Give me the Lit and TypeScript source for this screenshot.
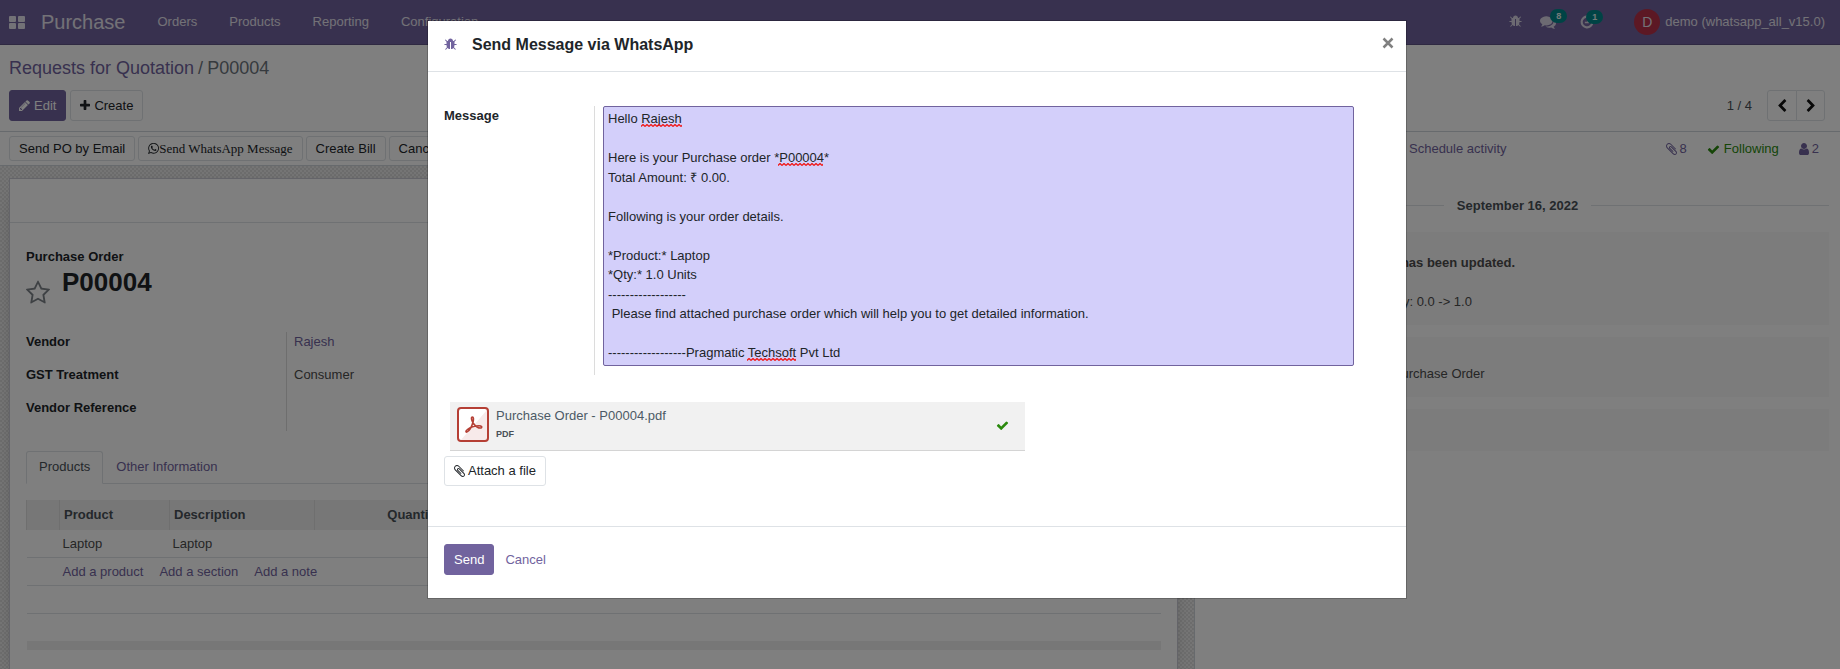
import { LitElement, html, css, svg } from "lit";
import { customElement } from "lit/decorators.js";

const ICONS: Record<string, { w: number; d: string }> = {
  bug: { w: 1664, d: "M1632 832q0 26-19 45t-45 19h-224q0 171-67 290l208 209q19 19 19 45t-19 45q-18 19-45 19t-45-19l-198-197q-5 5-15 13t-42 28.500-65 36.500-82 29-97 13v-896h-128v896q-51 0-101.500-13.500t-87-33-66-39-43.500-32.500l-15-14-183 207q-20 21-48 21-24 0-43-16-19-18-20.500-44.500t15.500-46.500l202-227q-58-114-58-274h-224q-26 0-45-19t-19-45 19-45 45-19h224v-294l-173-173q-19-19-19-45t19-45 45-19 45 19l173 173h844l173-173q19-19 45-19t45 19 19 45-19 45l-173 173v294h224q26 0 45 19t19 45zM1152 384h-640q0-133 93.500-226.500t226.500-93.500 226.500 93.500 93.500 226.500z" },
  pencil: { w: 1536, d: "M363 1536l91-91-235-235-91 91v107h128v128h107zM886 608q0-22-22-22-10 0-17 7l-542 542q-7 7-7 17 0 22 22 22 10 0 17-7l542-542q7-7 7-17zM832 416l416 416-832 832h-416v-416zM1515 512q0 53-37 90l-166 166-416-416 166-165q36-38 90-38 53 0 91 38l235 234q37 39 37 91z" },
  plus: { w: 1408, d: "M1408 736v192q0 40-28 68t-68 28h-416v416q0 40-28 68t-68 28h-192q-40 0-68-28t-28-68v-416h-416q-40 0-68-28t-28-68v-192q0-40 28-68t68-28h416v-416q0-40 28-68t68-28h192q40 0 68 28t28 68v416h416q40 0 68 28t28 68z" },
  check: { w: 1792, d: "M1671 566q0 40-28 68l-724 724-136 136q-28 28-68 28t-68-28l-136-136-362-362q-28-28-28-68t28-68l136-136q28-28 68-28t68 28l294 295 656-657q28-28 68-28t68 28l136 136q28 28 28 68z" },
  user: { w: 1280, d: "M1280 1399q0 109-62.500 187t-150.500 78h-854q-88 0-150.500-78t-62.500-187q0-85 8.500-160.500t31.500-152 58.500-131 94-89 134.500-34.500q131 128 313 128t313-128q76 0 134.500 34.500t94 89 58.500 131 31.500 152 8.500 160.500zM1024 512q0 159-112.500 271.500t-271.500 112.500-271.500-112.500-112.500-271.500 112.500-271.500 271.500-112.500 271.500 112.500 112.500 271.500z" },
  left: { w: 1280, d: "M1171 301l-531 531 531 531q19 19 19 45t-19 45l-166 166q-19 19-45 19t-45-19l-742-742q-19-19-19-45t19-45l742-742q19-19 45-19t45 19l166 166q19 19 19 45t-19 45z" },
  right: { w: 1280, d: "M1107 877l-742 742q-19 19-45 19t-45-19l-166-166q-19-19-19-45t19-45l531-531-531-531q-19-19-19-45t19-45l166-166q19-19 45-19t45 19l742 742q19 19 19 45t-19 45z" },
  clip: { w: 1408, d: "M1404 1385q0 117-79 196t-196 79q-135 0-235-100l-777-776q-113-115-113-271 0-159 110-270t269-111q158 0 273 113l605 606q10 10 10 22 0 16-30.500 46.500t-46.500 30.500q-13 0-23-10l-606-607q-79-77-181-77-106 0-179 75t-73 181q0 105 76 181l776 777q63 63 145 63 64 0 106-42t42-106q0-82-63-145l-581-581q-26-24-60-24-29 0-48 19t-19 48q0 32 25 59l410 410q10 10 10 22 0 16-31 47t-47 31q-12 0-22-10l-410-410q-63-61-63-149 0-82 57-139t139-57q88 0 149 63l581 581q100 98 100 235z" },
  comments: { w: 1792, d: "M1408 768q0 139-94 257t-256.500 186.500-353.500 68.500q-86 0-176-16-124 88-278 128-36 9-86 16h-3q-11 0-20.500-8t-11.500-21q-1-3-1-6.500t.5-6.500 2-6l2.500-5t3.500-5.500 4-5 4.500-5 4-4.500q5-6 23-25t26-29.500 22.500-29 25-38.500 20.500-44q-124-72-195-177t-71-224q0-139 94-257t256.500-186.500 353.500-68.500 353.500 68.500 256.500 186.500 94 257zM1792 1024q0 120-71 224.500t-195 176.500q10 24 20.500 44t25 38.500 22.500 29 26 29.500 23 25q1 1 4 4.500t4.500 5 4 5 3.500 5.500l2.500 5t2 6 .5 6.500-1 6.500q-3 14-13 22t-22 7q-50-7-86-16-154-40-278-128-90 16-176 16-271 0-472-132 58 4 88 4 161 0 309-45t264-129q125-92 192-212t67-254q0-77-23-152 129 71 204 178t75 230z" },
  whatsapp: { w: 1536, d: "M985 974q13 0 97.500 44t89.500 53q2 5 2 15 0 33-17 76-16 39-71 65.500t-102 26.500q-57 0-190-62-98-45-170-118t-148-185q-72-107-71-194v-8q3-91 74-158 24-22 52-22 6 0 18 1.500t19 1.500q19 0 26.500 6.500t15.500 27.500q8 20 33 88t25 75q0 21-34.500 57.500t-34.500 46.500q0 7 5 15 34 73 102 137 56 53 151 101 12 7 22 7 15 0 54-48.500t52-48.500zM782 1492q127 0 243.500-50t200.500-134 134-200.500 50-243.500-50-243.500-134-200.500-200.500-134-243.500-50-243.500 50-200.500 134-134 200.500-50 243.500q0 203 120 368l-79 233 242-77q158 104 345 104zM782 111q153 0 292.500 60t240.500 161 161 240.500 60 292.500-60 292.500-161 240.500-240.500 161-292.500 60q-195 0-365-94l-417 134 136-405q-108-178-108-389 0-153 60-292.500t161-240.500 240.500-161 292.500-60z" },
  star: { w: 1664, d: "M1137 1004l306-297-422-62-189-382-189 382-422 62 306 297-73 421 378-199 377 199zM1664 647q0 22-26 48l-363 354 86 500q1 7 1 20 0 50-41 50-19 0-40-12l-449-236-449 236q-22 12-40 12-21 0-31.500-14.500t-10.500-35.500q0-6 2-20l86-500-364-354q-25-27-25-48 0-37 56-46l502-73 225-455q19-41 49-41t49 41l225 455 502 73q56 9 56 46z" },
};

/** Font-style glyph: one em tall, as wide as the glyph's own advance. */
const icon = (name: string, size = 13) => {
  const i = ICONS[name];
  return html`<svg class="icon" aria-hidden="true" height=${size} width=${Math.round((i.w / 1792) * size)}
    viewBox="0 0 ${i.w} 1792"><path fill="currentColor" d=${i.d}></path></svg>`;
};

const MESSAGE = `Hello Rajesh

Here is your Purchase order *P00004*
Total Amount: ₹ 0.00.

Following is your order details.

*Product:* Laptop
*Qty:* 1.0 Units
------------------
 Please find attached purchase order which will help you to get detailed information.

------------------Pragmatic Techsoft Pvt Ltd`;

const base = css`
  * { box-sizing: border-box; }
  a { color: #71639e; text-decoration: none; }
  button { font: inherit; color: inherit; cursor: pointer; margin: 0; }
  .icon { display: inline-block; flex: none; }
  .btn {
    display: inline-flex; align-items: center; gap: 4px; height: 31px; padding: 0 9px;
    border: 1px solid #dee2e6; border-radius: 3px; background: #fff; color: #212529; white-space: nowrap;
  }
  .primary { background: #71639e; border-color: #71639e; color: #fff; }
`;

@customElement("main-navbar")
export class MainNavbar extends LitElement {
  static styles = [base, css`
    :host { display: block; }
    .bar { display: flex; align-items: center; height: 45px; padding: 0 15px 0 9px; background: #71639e; border-bottom: 1px solid #5f5385; color: #fff; }
    .bar a { color: #e6e4ee; }
    .apps { display: flex; padding: 0; border: 0; background: none; color: #e6e4ee; margin-right: 16px; }
    .brand { font-size: 20px; line-height: 30px; }
    .menu { display: flex; gap: 32px; margin: 0 auto 0 32px; }
    .tray { display: flex; align-items: center; color: #d8d5e4; }
    .tray button { position: relative; display: flex; border: 0; padding: 0; background: none; }
    .bug { margin-right: 18px; }
    .talk { margin-right: 24px; }
    .badge {
      position: absolute; left: 10px; top: -5px; min-width: 16px; height: 14px; padding: 0 6px; border-radius: 7px;
      background: #00878a; color: #e8f3f3; font-size: 9px; font-weight: 700; line-height: 14px;
    }
    .clock .badge { left: 6px; }
    .user { display: flex; align-items: center; gap: 5px; margin-left: 40px; }
    .avatar { width: 26px; height: 26px; border-radius: 50%; background: #b83048; font-size: 14px; line-height: 26px; text-align: center; }
  `];
  render() {
    return html`<header class="bar">
      <button class="apps" aria-label="Apps"><svg width="16" height="13" viewBox="0 0 16 13" fill="currentColor">
        <rect width="7" height="6" rx="1"/><rect x="9" width="7" height="6" rx="1"/><rect y="7" width="7" height="6" rx="1"/><rect x="9" y="7" width="7" height="6" rx="1"/></svg></button>
      <a class="brand" href="#">Purchase</a>
      <nav class="menu"><a href="#">Orders</a><a href="#">Products</a><a href="#">Reporting</a><a href="#">Configuration</a></nav>
      <div class="tray">
        <button class="bug" aria-label="Debug">${icon("bug", 14)}</button>
        <button class="talk" aria-label="Messages">${icon("comments", 16)}<span class="badge">8</span></button>
        <button class="clock" aria-label="Activities"><svg width="14" height="14" viewBox="0 0 13 13" fill="none" stroke="currentColor"><path stroke-width="2" d="M7 1.500A5 5 0 1 0 11.500 7"/><path stroke-width="1.500" d="M4.500 7H7.500V4"/></svg><span class="badge">1</span></button>
        <a class="user" href="#"><span class="avatar">D</span>demo (whatsapp_all_v15.0)</a>
      </div>
    </header>`;
  }
}

@customElement("control-panel")
export class ControlPanel extends LitElement {
  static styles = [base, css`
    :host { display: block; }
    .panel { padding: 12px 15px 10px 9px; border-bottom: 1px solid #ced4da; background: #fff; }
    .crumbs { display: flex; gap: 4px; margin: 0 0 11px; font-size: 18px; line-height: 22px; color: #6c757d; font-weight: 400; }
    .actions { display: flex; align-items: center; gap: 4px; }
    .pager { display: flex; align-items: center; gap: 15px; margin-left: auto; color: #495057; }
    .pair { display: flex; }
    .pair .btn { width: 29px; padding: 0; justify-content: center; color: #111; }
    .pair .prev { width: 30px; border-radius: 3px 0 0 3px; }
    .next { border-radius: 0 3px 3px 0; margin-left: -1px; }
  `];
  render() {
    return html`<section class="panel">
      <nav class="crumbs" aria-label="Breadcrumb"><a href="#">Requests for Quotation</a><span>/</span><span>P00004</span></nav>
      <div class="actions">
        <button class="btn primary">${icon("pencil")}Edit</button>
        <button class="btn">${icon("plus")}Create</button>
        <div class="pager"><span>1 / 4</span><div class="pair">
          <button class="btn prev" aria-label="Previous">${icon("left", 14)}</button><button class="btn next" aria-label="Next">${icon("right", 14)}</button>
        </div></div>
      </div>
    </section>`;
  }
}

@customElement("order-form")
export class OrderForm extends LitElement {
  static styles = [base, css`
    :host { display: flex; flex-direction: column; min-width: 0; overflow: hidden; }
    .status { display: flex; gap: 3px; padding: 4px 9px; border-bottom: 1px solid #ced4da; background: #fff; }
    .status .btn { height: 25px; }
    .wa { font-family: "Liberation Serif", serif; gap: 0; }
    .canvas {
      flex: 1; padding: 12px 16px 0 9px;
      background: repeating-conic-gradient(#dadada 0 25%, #ebebeb 0 50%) 0 0 / 4px 4px;
    }
    .sheet { height: 100%; background: #fff; border: 1px solid #c8c8d3; box-shadow: 0 5px 20px -15px #000; }
    .steps { height: 44px; border-bottom: 1px solid #dee2e6; }
    .content { padding: 24px 16px; }
    .caption { font-weight: 700; color: #212529; }
    .title { display: flex; align-items: flex-start; gap: 12px; }
    .title h1 { margin: 0; font-size: 26px; line-height: 31px; color: #212529; }
    .star { border: 0; background: none; padding: 13px 0 0; display: flex; color: #7c8288; }
    .fields { display: grid; grid-template-columns: 260px 1fr; margin: 26px 0 20px; }
    .fields dt { height: 33px; font-weight: 700; color: #212529; }
    .fields dd { height: 33px; margin: 0; padding-left: 7px; border-left: 1px solid #dcdcdc; color: #4c4c4c; }
    .tabs { display: flex; border-bottom: 1px solid #dee2e6; margin-bottom: 16px; }
    .tab { height: 33px; padding: 0 12px; border: 1px solid transparent; border-radius: 3px 3px 0 0; background: none; color: #71639e; margin-bottom: -1px; }
    .tab.active { color: #495057; background: #fff; border-color: #dee2e6 #dee2e6 #fff; }
    table { width: 100%; border-collapse: collapse; table-layout: fixed; color: #4c4c4c; }
    th { height: 30px; padding: 0 4px; text-align: left; background: #eee; border-left: 1px solid #dfdfdf; color: #495057; }
    th.num { text-align: right; }
    td { height: 28px; padding: 0 3px; border-bottom: 1px solid #dee2e6; }
    .c0 { width: 33px; } .c1 { width: 110px; } .c2 { width: 145px; } .c3 { width: 130px; }
    .adds { display: flex; gap: 16px; }
    .foot td { height: 9px; background: #eee; border: 0; }
    tr.last td { height: 27px; border: 0; }
  `];
  render() {
    return html`
      <div class="status">
        <button class="btn">Send PO by Email</button>
        <button class="btn wa">${icon("whatsapp", 13)}Send WhatsApp Message</button>
        <button class="btn">Create Bill</button>
        <button class="btn">Cancel</button>
      </div>
      <div class="canvas"><div class="sheet">
        <div class="steps"></div>
        <div class="content">
          <div class="caption">Purchase Order</div>
          <div class="title"><button class="star" aria-label="Priority">${icon("star", 26)}</button><h1>P00004</h1></div>
          <dl class="fields">
            <dt>Vendor</dt><dd><a href="#">Rajesh</a></dd>
            <dt>GST Treatment</dt><dd>Consumer</dd>
            <dt>Vendor Reference</dt><dd></dd>
          </dl>
          <div class="tabs" role="tablist">
            <button class="tab active" role="tab" aria-selected="true">Products</button>
            <button class="tab" role="tab" aria-selected="false">Other Information</button>
          </div>
          <table>
            <thead><tr><th class="c0"></th><th class="c1">Product</th><th class="c2">Description</th><th class="c3 num">Quantity</th><th></th></tr></thead>
            <tbody>
              <tr><td></td><td>Laptop</td><td>Laptop</td><td></td><td></td></tr>
              <tr><td></td><td colspan="4"><div class="adds"><a href="#">Add a product</a><a href="#">Add a section</a><a href="#">Add a note</a></div></td></tr>
              <tr><td colspan="5"></td></tr>
              <tr class="last"><td colspan="5"></td></tr>
            </tbody>
            <tfoot><tr class="foot"><td colspan="5"></td></tr></tfoot>
          </table>
        </div>
      </div></div>`;
  }
}

@customElement("chatter-panel")
export class ChatterPanel extends LitElement {
  static styles = [base, css`
    :host { display: block; background: #fff; border-left: 1px solid #ced4da; padding: 0 11px; color: #4c4c4c; }
    .top { display: flex; align-items: center; height: 34px; padding: 0 10px 0 0; }
    .top .schedule { margin-left: 203px; margin-right: auto; }
    .top button { display: flex; align-items: center; gap: 3px; border: 0; padding: 0; background: none; color: #71639e; margin-left: 20px; }
    .top .follow { color: #2b8a0e; gap: 4px; }
    .date { display: flex; align-items: center; gap: 13px; margin: 30px 0 16px; font-weight: 700; color: #495057; }
    .date::before, .date::after { content: ""; flex: 1; border-top: 1px solid #dee2e6; }
    .note { background: #f8f8f8; margin-bottom: 12px; }
    .note p { margin: 0; }
    .first { height: 93px; padding: 21px 0 0 62px; }
    .first p + p { margin-top: 20px; padding-left: 93px; }
    .second { height: 60px; padding: 27px 0 0 59px; }
    .third { height: 42px; }
  `];
  render() {
    return html`
      <div class="top">
        <a class="schedule" href="#">Schedule activity</a>
        <button aria-label="8 attachments">${icon("clip", 14)}8</button>
        <button class="follow">${icon("check", 13)}Following</button>
        <button aria-label="2 followers">${icon("user", 14)}2</button>
      </div>
      <div class="date">September 16, 2022</div>
      <div class="note first"><p><b>The ordered quantity has been updated.</b></p><p>Quantity: 0.0 -&gt; 1.0</p></div>
      <div class="note second"><p>RFQ converted to the Purchase Order</p></div>
      <div class="note third"></div>`;
  }
}

@customElement("whatsapp-dialog")
export class WhatsappDialog extends LitElement {
  static styles = [base, css`
    :host { display: block; width: 100%; max-width: 980px; }
    .dialog { background: #fff; background-clip: padding-box; border: 1px solid rgba(0, 0, 0, 0.2); color: #212529; }
    .head { display: flex; align-items: center; height: 51px; padding: 0 11px 2px 16px; border-bottom: 1px solid #dee2e6; }
    .head h2 { margin: 0 auto 0 15px; font-size: 16px; line-height: 24px; }
    .head button { border: 0; background: none; padding: 0; display: flex; }
    .debug { color: #71639e; }
    .head .close { color: #808080; padding-bottom: 4px; }
    .body { padding: 34px 52px 40px 16px; }
    .group { display: grid; grid-template-columns: 150px 1fr; }
    .group label { font-weight: 700; }
    .value { position: relative; border-left: 1px solid #dcdcdc; padding: 0 0 9px 8px; }
    textarea {
      display: block; width: 100%; height: 260px; padding: 2px 4px; resize: none; overflow: hidden; outline: 0;
      border: 1px solid #71639e; border-radius: 2px; background: #d3cffa; color: #212529; font: inherit;
    }
    .spelling { position: absolute; left: 8px; top: 0; pointer-events: none; }
    .file {
      display: grid; grid-template-columns: 32px 1fr auto; gap: 7px; width: 100%; max-width: 575px; height: 49px;
      margin: 27px 0 5px 6px; padding: 5px 16px 0 7px; background: #f1f1f1; border-bottom: 1px solid #d4d4d4;
    }
    .name { line-height: 18px; }
    .name a { color: #4c5a66; }
    .name small { display: block; font-size: 9px; line-height: 18px; font-weight: 700; color: #495057; }
    .done { color: #2b8a0e; margin-top: 11px; }
    .attach { height: 30px; gap: 3px; }
    .foot { display: flex; align-items: center; gap: 11px; height: 72px; padding: 0 16px 6px; border-top: 1px solid #dee2e6; }
    .link { border: 0; background: none; padding: 0; color: #71639e; }
  `];
  render() {
    return html`<div class="dialog" role="dialog" aria-labelledby="title">
      <div class="head">
        <button class="debug" aria-label="Debug">${icon("bug", 14)}</button>
        <h2 id="title">Send Message via WhatsApp</h2>
        <button class="close" aria-label="Close"><svg width="14" height="14" viewBox="0 0 14 14" stroke="currentColor" stroke-width="2.500"><path d="M2.500 2.500l9 9M11.500 2.500l-9 9"/></svg></button>
      </div>
      <div class="body">
        <div class="group">
          <label for="message">Message</label>
          <div class="value">
            <textarea id="message" spellcheck="false" .value=${MESSAGE}></textarea>
            <svg class="spelling" width="220" height="260" aria-hidden="true">
              <defs><pattern id="wave" width="4" height="3" patternUnits="userSpaceOnUse"><path d="M0 2.500L2 .5L4 2.500" fill="none" stroke="#f01818" stroke-width="1.300"/></pattern></defs>
              ${[[38, 18, 41], [175, 57, 46], [144, 252, 49]].map(
                ([x, y, w]) => svg`<rect width=${w} height="3" transform="translate(${x} ${y})" fill="url(#wave)"/>`)}
            </svg>
          </div>
        </div>
        <div class="file">
          <svg width="32" height="35" viewBox="0 0 32 35" aria-hidden="true">
            <rect x="1" y="1" width="30" height="33" rx="3" fill="#fff"/>
            <path d="M30 3V32a2 2 0 0 1-2 2H3z" fill="#f7eaea"/>
            <rect x="1" y="1" width="30" height="33" rx="3" fill="none" stroke="#b53f35" stroke-width="2"/>
            <path d="M15.500 10c-1.800 0-1 3.500.8 6.300 2 3 5.500 5.200 7.700 4.600 1.600-.6.500-2.200-2-2.200-4 0-9 1.600-11.600 3.800-2 1.600-1.800 3.200-.3 2.400 2.300-1.300 5-6.500 6-10.200.6-2.600.4-4.700-.6-4.700z" fill="none" stroke="#b53f35" stroke-width="1.600"/>
          </svg>
          <div class="name"><a href="#">Purchase Order - P00004.pdf</a><small>PDF</small></div>
          <span class="done">${icon("check", 13)}</span>
        </div>
        <button class="btn attach">${icon("clip", 14)}Attach a file</button>
      </div>
      <div class="foot"><button class="btn primary">Send</button><button class="link">Cancel</button></div>
    </div>`;
  }
}

@customElement("app-root")
export class AppRoot extends LitElement {
  static styles = css`
    :host {
      display: flex; flex-direction: column; position: relative; height: 100vh; overflow: hidden;
      font-family: "Liberation Sans", Arial, sans-serif; font-size: 13px; line-height: 1.5; background: #fff;
    }
    .main { flex: 1; min-height: 0; display: grid; grid-template-columns: 1194fr 646fr; }
    .backdrop {
      position: absolute; inset: 0; display: flex; justify-content: center; align-items: flex-start;
      padding: 20px 6px 0 0; background: rgba(0, 0, 0, 0.5);
    }
  `;
  render() {
    return html`
      <main-navbar></main-navbar>
      <control-panel></control-panel>
      <div class="main"><order-form></order-form><chatter-panel></chatter-panel></div>
      <div class="backdrop"><whatsapp-dialog></whatsapp-dialog></div>`;
  }
}
